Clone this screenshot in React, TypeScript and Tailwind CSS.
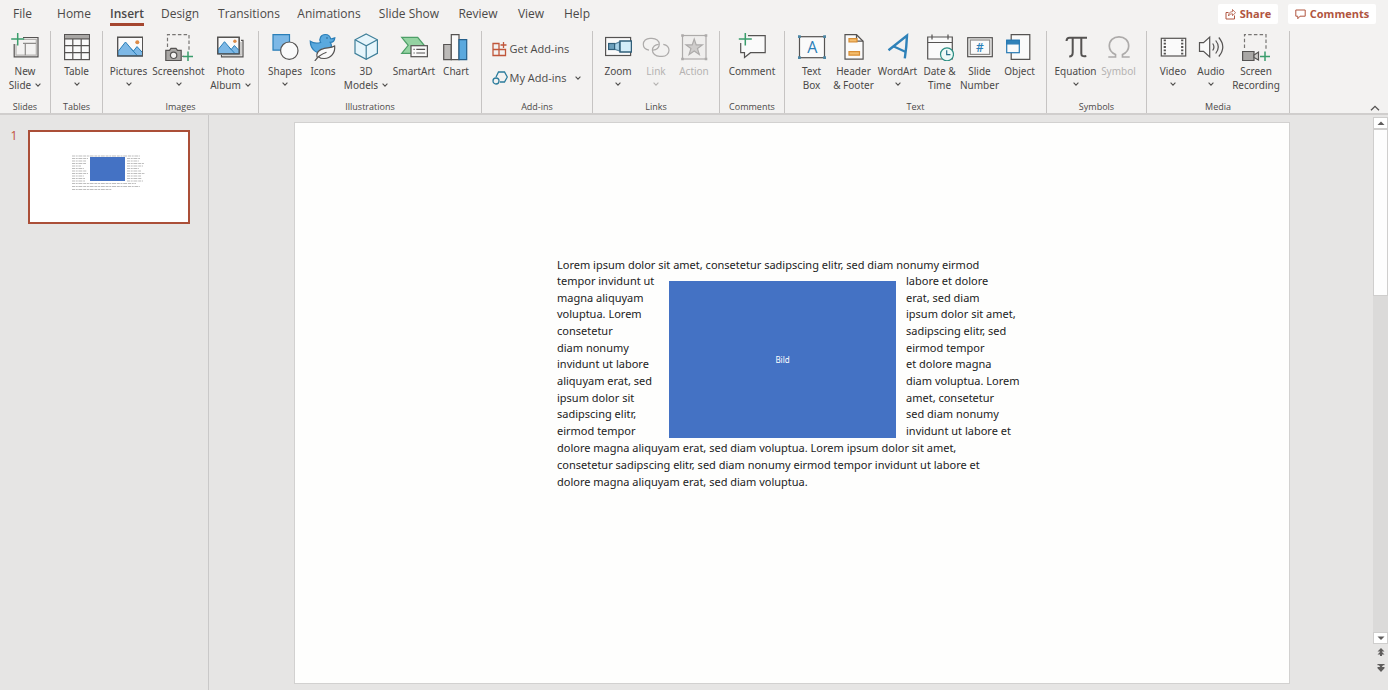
import type { ReactNode } from "react";

const ink = "#555352";
const blue = "#2b7fb8";
const sky = "#7db8e6";
const green = "#3a9d6c";

function Icon({ children, faded = false }: { children: ReactNode; faded?: boolean }) {
  return (
    <svg
      viewBox="0 0 28 28"
      width="28"
      height="28"
      fill="none"
      stroke={faded ? "#adabaa" : ink}
      strokeWidth="1.2"
      className="shrink-0"
      aria-hidden="true"
    >
      {children}
    </svg>
  );
}

function Chevron({ faded = false }: { faded?: boolean }) {
  return (
    <svg
      viewBox="0 0 6 4"
      width="6"
      height="4"
      fill="none"
      stroke={faded ? "#b5b3b2" : "#504e4d"}
      strokeWidth="1.1"
      className="shrink-0"
      aria-hidden="true"
    >
      <path d="M.6.7 3 3.1 5.4.7" />
    </svg>
  );
}

const icons: Record<string, ReactNode> = {
  newSlide: (
    <Icon>
      <path d="M12 4.5h15v19.3H3.2V11" />
      <path d="M12 6.3h13.3v15.8H5V11" stroke="#b5b3b1" />
      <path d="M12 10.3h13M14.3 10.3v12" stroke="#8d8b89" />
      <path d="M6.7 0v12.5M.2 6h13" stroke={green} strokeWidth="1.5" />
    </Icon>
  ),
  table: (
    <Icon>
      <rect x="1.6" y="1.6" width="24.8" height="25" fill="#fafafa" />
      <path d="M2 2h24v3.6H2z" fill="#a9a7a5" stroke="none" />
      <path d="M1.6 5.8h24.8M1.6 12.6h24.8M1.6 19.6h24.8M9.8 5.8v21M18.2 5.8v21" />
    </Icon>
  ),
  pictures: (
    <Icon>
      <rect x="2.6" y="4.3" width="25" height="18.6" fill="#fafafa" />
      <path d="M3 18.6 10.5 9l7.8 9.2 3.7-4.6 5.5 6v3.2H3z" fill={sky} stroke={blue} strokeWidth="1" />
      <path d="m16 15.6 6.5 7.3" stroke={blue} strokeWidth="1" />
      <circle cx="22.3" cy="9.3" r="2" fill="#dd8b47" stroke="none" />
      <rect x="2.6" y="4.3" width="25" height="18.6" />
    </Icon>
  ),
  screenshot: (
    <Icon>
      <path d="M2.5 14V1.6H24V18M17 23.400h2" strokeDasharray="3.500 2.200" stroke="#777573" />
      <path d="M.8 17.300h3.700l1.500-2h5l1.500 2h3.700v10.200H.8z" fill="#a9a7a5" />
      <circle cx="8.600" cy="22.300" r="3.200" fill="#f4f3f2" />
      <path d="M23 18.500v10M18 23.500h10" stroke={green} strokeWidth="1.500" />
    </Icon>
  ),
  photoAlbum: (
    <Icon>
      <path d="M24 7.300h2v16.500H4.500V22" />
      <path d="M24 9v13H6" stroke="#b5b3b1" />
      <rect x=".7" y="4.300" width="21.500" height="16.500" fill="#fafafa" />
      <path d="m1.200 16.500 6.300-7.800 6.700 7.800 3.200-4 4.700 5v3.200H1.200z" fill={sky} stroke={blue} strokeWidth="1" />
      <path d="m12.400 14.500 5.500 6" stroke={blue} strokeWidth="1" />
      <circle cx="17.900" cy="8.300" r="1.700" fill="#dd8b47" stroke="none" />
      <rect x=".7" y="4.300" width="21.500" height="16.500" />
    </Icon>
  ),
  shapes: (
    <Icon>
      <path d="M2 1.700h16.500v15.500H2z" fill={sky} stroke={blue} />
      <circle cx="18.300" cy="17.700" r="8.700" fill="#fafafa" />
    </Icon>
  ),
  icons: (
    <Icon>
      <path
        d="M1.300 8.200c3.300 2.300 6.700 2.300 10.300 1.300-2-3.800.4-8 4.700-8 2.700 0 4.800 1.700 5.300 4.200 1.500.2 2.800-.1 4.200-.8-.2 2.900-1.900 4.400-4.600 4.500 3.500 5-1.300 10.700-8.700 10.700-7 0-11.200-5.300-11.200-11.900z"
        fill="#5aa9de"
        stroke={blue}
      />
      <circle cx="18" cy="5" r=".8" fill="#255f88" stroke="none" />
      <path d="M8.300 24.500c-1.600-4.200 1.500-8.200 7-9.200 4.500-.8 7.500-.6 10.300-2.400 1 6.600-3.500 12.600-10.400 12.600-2.500 0-4.500-.6-5.500-1.700" fill="#fafafa" />
      <path d="M5.800 28c2.500-4 6.200-6.800 11.700-8.800" />
    </Icon>
  ),
  models: (
    <Icon>
      <path d="M14.200 1 25.400 6.800v13.500L14.200 26.400 3 20.300V6.800z" fill="#e6f5fb" stroke="#3e7f99" />
      <path d="m3 6.800 11.200 6 11.200-6M14.200 12.800v13.600" stroke="#3e7f99" />
    </Icon>
  ),
  smartArt: (
    <Icon>
      <path d="M1.700 4.300h16l6.500 8-6.500 8h-16l6.500-8z" fill="#94d3a2" stroke="#4d9f68" />
      <rect x="11" y="12.700" width="16.400" height="11" fill="#fafafa" />
      <path d="M13.500 16.300h1.200M16.300 16.300h8.800M13.500 20h1.200M16.300 20h8.800" />
    </Icon>
  ),
  chart: (
    <Icon>
      <path d="M1.700 11.500h7.600v15.200H1.700z" fill="#bcbab8" />
      <path d="M9.300 1.600H17v25.100H9.300z" fill="#fafafa" />
      <path d="M17 6.700h7.700v20H17z" fill="#5aa9de" stroke="#245f8b" />
    </Icon>
  ),
  zoom: (
    <Icon>
      <rect x="1.600" y="4.500" width="25" height="18" fill="#fafafa" />
      <path d="m9.500 11.500 6-2.500v9l-6-2.200z" fill="#a9d2e8" stroke="#5b87a0" />
      <rect x="4.600" y="10.500" width="6" height="6" fill="#6c9fbb" stroke="#315f7a" />
      <rect x="16" y="8" width="11.500" height="11" fill="#d4edf8" stroke="#315f7a" strokeWidth="1.500" />
    </Icon>
  ),
  link: (
    <Icon faded>
      <path d="M7 17.200C3.300 16.500 1.300 14.300 1.300 11.300c0-3.500 2.900-6 6.700-6h2c4.200 0 7.300 2.600 7.300 6 0 3.500-2.800 5.900-6.300 5.900" />
      <path d="M21.300 11.300c3.700.7 5.700 3 5.700 6 0 3.500-2.900 6-6.700 6h-2.600c-4.200 0-7.300-2.600-7.300-6 0-3.500 2.800-6 6.300-6" />
    </Icon>
  ),
  action: (
    <Icon faded>
      <rect x="2.500" y="2.500" width="23.500" height="23.500" fill="#efeeed" />
      <path d="M1.200 1.200h2.600v2.600H1.200zM24.700 1.200h2.600v2.600h-2.600zM1.200 24.700h2.600v2.600H1.200zM24.700 24.700h2.600v2.600h-2.600z" fill="#adabaa" stroke="none" />
      <path d="m14.200 6 2 5.900h6.200l-4.900 3.700 1.800 6-5.100-3.600-5.100 3.600 1.800-6-4.900-3.700h6.200z" fill="#cfcdcc" />
    </Icon>
  ),
  comment: (
    <Icon>
      <path d="M10 2.700h17.200v17H12.500L6.500 24.500v-4.800H2.700V10" fill="#fafafa" />
      <path d="M7.300 0v12.500M.8 6h13" stroke={green} strokeWidth="1.500" />
    </Icon>
  ),
  textBox: (
    <Icon>
      <rect x="1.500" y="3.700" width="25" height="21" fill="#fafafa" />
      <path d="M0 2.300h2.800v2.800H0zM25.200 2.300H28v2.800h-2.800zM0 23.200h2.800V26H0zM25.200 23.200H28V26h-2.800z" fill="#4d87a5" stroke="none" />
      <text x="14.200" y="20" textAnchor="middle" fontSize="16" fontFamily="'Open Sans', sans-serif" fill={blue} stroke="none">
        A
      </text>
    </Icon>
  ),
  header: (
    <Icon>
      <path d="M5 1.700h11.500l6.600 6.500v18H5z" fill="#fafafa" />
      <path d="M16.500 1.700v6.500h6.600" />
      <path d="M9 5.600h8v3.200H9zM9 18.600h10.500v3.600H9z" fill="#f3bd6d" stroke="#d98e34" />
    </Icon>
  ),
  wordArt: (
    <Icon>
      <path d="M4.500 17.200 23 2.600c-.3 7.500-1 15-2.200 22.800" stroke="#2f82b9" strokeWidth="2.400" />
      <path d="m9.300 13.300 12 5.400" stroke="#2f82b9" strokeWidth="2.200" />
    </Icon>
  ),
  date: (
    <Icon>
      <path d="M1.700 4h24.600v22H1.700z" fill="#fafafa" />
      <path d="M1.700 9.500h24.600M6 1.500v5M22 1.500v5" />
      <circle cx="21" cy="21.300" r="6.500" fill="#eefaf7" stroke="#2d8f84" />
      <path d="M20.700 17.300v4.300h3.700" stroke="#27708a" />
    </Icon>
  ),
  slideNumber: (
    <Icon>
      <rect x="1.700" y="4.700" width="24.600" height="19" />
      <rect x="4.300" y="7" width="19.400" height="14.400" fill="#fafafa" stroke="#8d8b89" />
      <text x="14" y="18.600" textAnchor="middle" fontSize="12" fontWeight="600" fontFamily="'Open Sans', sans-serif" fill={blue} stroke="none">
        #
      </text>
    </Icon>
  ),
  object: (
    <Icon>
      <path d="M5.200 7V1.700h18.600v24.600H5.200V20" fill="#fafafa" />
      <rect x=".7" y="7.300" width="12.600" height="12.400" fill="#fafafa" stroke="#2779b3" />
      <path d="M.7 7.300h12.600v3.500H.7z" fill="#2f82b9" stroke="#2779b3" />
    </Icon>
  ),
  equation: (
    <Icon>
      <path d="M4.500 8c.2-2.300 1.200-3.200 3-3.200h17.500M10.700 5v14.500c0 2.500-1.200 4-3.500 4M19.300 5v15.500c0 2.500 1.500 3.200 5 2.500" strokeWidth="2" />
    </Icon>
  ),
  symbol: (
    <Icon faded>
      <path d="M3.300 24h7.200v-2.500C6.500 19.700 4.300 17 4.300 13c0-5.500 4-9.200 9.700-9.200s9.700 3.700 9.700 9.200c0 4-2.200 6.700-6.200 8.500V24h7.200" strokeWidth="1.700" />
    </Icon>
  ),
  video: (
    <Icon>
      <rect x="2.300" y="5.300" width="24.400" height="17.700" fill="#fafafa" />
      <path d="M5.800 6.500v16M23.200 6.500v16" strokeWidth="2.200" strokeDasharray="1.800 1.500" />
    </Icon>
  ),
  audio: (
    <Icon>
      <path d="M2.500 9.700h4L12.700 4v20l-6.200-5.700h-4z" fill="#fafafa" />
      <path d="M15.700 10.500c1.600 2.300 1.600 4.700 0 7M18.700 7.500c3.400 4.300 3.400 8.700 0 13M21.800 4.500c5.300 6.300 5.300 12.700 0 19" />
    </Icon>
  ),
  recording: (
    <Icon>
      <path d="M2.500 15V1.600H24V17" strokeDasharray="3.500 2.200" stroke="#777573" />
      <path d="M.6 18.500h11.400v9H.6z" fill="#a9a7a5" />
      <path d="m12 22 4.500-3v8L12 24.500z" fill="#cfcdcb" />
      <path d="M23 18.500v10M18 23.500h10" stroke={green} strokeWidth="1.500" />
    </Icon>
  ),
};

type Tool = {
  icon: string;
  lines: string[];
  width: string;
  menu?: "below" | "inline";
  disabled?: boolean;
};

function ToolButton({ icon, lines, width, menu, disabled }: Tool) {
  return (
    <button
      type="button"
      disabled={disabled}
      className={`flex flex-col items-center whitespace-nowrap font-['Noto_Sans','Open_Sans',sans-serif] text-[10px] leading-[14px] text-[#4b4948] disabled:text-[#b5b3b2] ${width}`}
    >
      {icons[icon]}
      <span className="mt-[3px]">{lines[0]}</span>
      {lines[1] && (
        <span className="flex items-center gap-1">
          {lines[1]}
          {menu === "inline" && <Chevron />}
        </span>
      )}
      {menu === "below" && (
        <span className="flex h-3 items-center">
          <Chevron faded={disabled} />
        </span>
      )}
    </button>
  );
}

function Group({ label, width, tools, children }: { label: string; width: string; tools?: Tool[]; children?: ReactNode }) {
  return (
    <section
      aria-label={label}
      className={`flex h-[82px] shrink-0 flex-col justify-between border-r border-[#c6c4c3] ${width}`}
    >
      <div className="flex justify-center pt-[2px]">
        {tools?.map((tool) => (
          <ToolButton key={tool.icon} {...tool} />
        ))}
        {children}
      </div>
      <h2 className="text-center text-[9px] leading-3 text-[#4b4948]">{label}</h2>
    </section>
  );
}

const tabs = [
  { name: "File", width: "w-[45px]" },
  { name: "Home", width: "w-[58px]" },
  { name: "Insert", width: "w-12" },
  { name: "Design", width: "w-[58px]" },
  { name: "Transitions", width: "w-20" },
  { name: "Animations", width: "w-20" },
  { name: "Slide Show", width: "w-20" },
  { name: "Review", width: "w-[58px]" },
  { name: "View", width: "w-12" },
  { name: "Help", width: "w-11" },
];

function TabBar() {
  return (
    <div className="flex h-7 items-stretch justify-between pr-3">
      <nav className="flex" aria-label="Ribbon tabs">
        {tabs.map(({ name, width }) => (
          <button
            key={name}
            type="button"
            className={`flex shrink-0 justify-center whitespace-nowrap text-[12px] leading-7 text-[#4b4948] ${width}`}
          >
            {name === "Insert" ? (
              <span className="h-[26px] border-b-3 border-[#a5462f] font-semibold">{name}</span>
            ) : (
              name
            )}
          </button>
        ))}
      </nav>
      <div className="flex items-center gap-[10px] text-[11px] font-bold text-[#b0553f]">
        <button type="button" className="flex h-5 w-[60px] items-center justify-center gap-1 rounded-xs bg-white">
          <svg viewBox="0 0 11 12" width="11" height="12" fill="none" stroke="currentColor" aria-hidden="true">
            <path d="M3.500 4.500H1v6.500h8.500V7.500" />
            <path d="M3.500 8c0-3 1.500-4.300 4-4.300V1.500l3 3.200-3 3V5.800C5.500 5.800 4.300 6.500 3.500 8z" strokeWidth=".8" />
          </svg>
          Share
        </button>
        <button type="button" className="flex h-5 w-[88px] items-center justify-center gap-1 rounded-xs bg-white">
          <svg viewBox="0 0 11 11" width="11" height="11" fill="none" stroke="currentColor" aria-hidden="true">
            <path d="M.8 1h9.400v6.200H5L2.800 9.700V7.200h-2z" />
          </svg>
          Comments
        </button>
      </div>
    </div>
  );
}

function Ribbon() {
  return (
    <div className="flex h-[87px] items-start border-b-2 border-[#d0cecd] pt-[3px]">
      <Group
        label="Slides"
        width="w-[51px]"
        tools={[{ icon: "newSlide", lines: ["New", "Slide"], width: "w-12", menu: "inline" }]}
      />
      <Group
        label="Tables"
        width="w-[52px]"
        tools={[{ icon: "table", lines: ["Table"], width: "w-12", menu: "below" }]}
      />
      <Group
        label="Images"
        width="w-[156px]"
        tools={[
          { icon: "pictures", lines: ["Pictures"], width: "w-12", menu: "below" },
          { icon: "screenshot", lines: ["Screenshot"], width: "w-[52px]", menu: "below" },
          { icon: "photoAlbum", lines: ["Photo", "Album"], width: "w-[52px]", menu: "inline" },
        ]}
      />
      <Group
        label="Illustrations"
        width="w-[223px]"
        tools={[
          { icon: "shapes", lines: ["Shapes"], width: "w-[38px]", menu: "below" },
          { icon: "icons", lines: ["Icons"], width: "w-[38px]" },
          { icon: "models", lines: ["3D", "Models"], width: "w-12", menu: "inline" },
          { icon: "smartArt", lines: ["SmartArt"], width: "w-12" },
          { icon: "chart", lines: ["Chart"], width: "w-9" },
        ]}
      />
      <Group label="Add-ins" width="w-[111px]">
        <div className="flex w-[91px] flex-col gap-[13px] pt-2 text-[11px] leading-4 text-[#4b4948]">
          <button type="button" className="flex items-center gap-[2px] whitespace-nowrap">
            <svg viewBox="0 0 16 16" width="16" height="16" fill="none" stroke="#c0563a" strokeWidth="1.300" className="shrink-0" aria-hidden="true">
              <path d="M1 2.500h6v12H1zM1 8.500h12.500v6H7M11.500 1v6M8.500 4h6M7 8.500V6" />
            </svg>
            Get Add-ins
          </button>
          <button type="button" className="flex items-center gap-[2px] whitespace-nowrap">
            <svg viewBox="0 0 16 16" width="16" height="16" fill="none" stroke="#2b7c9c" strokeWidth="1.300" className="shrink-0" aria-hidden="true">
              <path d="M4 7 6.500 2h6L15.300 7l-2.800 5H8" />
              <circle cx="4" cy="11" r="3" />
            </svg>
            My Add-ins
            <span className="ml-auto pr-[2px]">
              <Chevron />
            </span>
          </button>
        </div>
      </Group>
      <Group
        label="Links"
        width="w-[127px]"
        tools={[
          { icon: "zoom", lines: ["Zoom"], width: "w-[38px]", menu: "below" },
          { icon: "link", lines: ["Link"], width: "w-[38px]", menu: "below", disabled: true },
          { icon: "action", lines: ["Action"], width: "w-[38px]", disabled: true },
        ]}
      />
      <Group label="Comments" width="w-[65px]" tools={[{ icon: "comment", lines: ["Comment"], width: "w-12" }]} />
      <Group
        label="Text"
        width="w-[262px]"
        tools={[
          { icon: "textBox", lines: ["Text", "Box"], width: "w-10" },
          { icon: "header", lines: ["Header", "& Footer"], width: "w-11" },
          { icon: "wordArt", lines: ["WordArt"], width: "w-11", menu: "below" },
          { icon: "date", lines: ["Date &", "Time"], width: "w-10" },
          { icon: "slideNumber", lines: ["Slide", "Number"], width: "w-10" },
          { icon: "object", lines: ["Object"], width: "w-10" },
        ]}
      />
      <Group
        label="Symbols"
        width="w-[100px]"
        tools={[
          { icon: "equation", lines: ["Equation"], width: "w-11", menu: "below" },
          { icon: "symbol", lines: ["Symbol"], width: "w-[42px]", disabled: true },
        ]}
      />
      <Group
        label="Media"
        width="w-[143px]"
        tools={[
          { icon: "video", lines: ["Video"], width: "w-[38px]", menu: "below" },
          { icon: "audio", lines: ["Audio"], width: "w-[38px]", menu: "below" },
          { icon: "recording", lines: ["Screen", "Recording"], width: "w-[52px]" },
        ]}
      />
      <button type="button" aria-label="Collapse ribbon" className="mr-2 ml-auto self-end pb-[2px]">
        <svg viewBox="0 0 10 6" width="10" height="6" fill="none" stroke="#555352" strokeWidth="1.300" aria-hidden="true">
          <path d="M1 5.300 5 1.300l4 4" />
        </svg>
      </button>
    </div>
  );
}

const thumbLines = [
  "M42 24h68",
  "M42 26.500h16M97 26.500h13",
  "M42 29h14M97 29h12",
  "M42 31.500h14M97 31.500h17",
  "M42 34h9M97 34h16",
  "M42 36.500h12M97 36.500h12",
  "M42 39h15M97 39h14",
  "M42 41.500h16M97 41.500h18",
  "M42 44h12M97 44h14",
  "M42 46.500h13M97 46.500h15",
  "M42 49h13M97 49h16",
  "M42 51.500h64",
  "M42 54.500h68",
  "M42 57.500h40",
];

function SlidePanel() {
  return (
    <aside className="w-[209px] shrink-0 border-r border-[#c9c8c8] pt-[15px] pl-2" aria-label="Slides">
      <button type="button" className="flex items-start gap-2 text-[#c0503c]">
        <span className="w-3 text-center text-[12px] leading-3 font-normal">1</span>
        <span className="block border-2 border-[#ab4f38] bg-white">
          <svg viewBox="0 0 158 90" width="158" height="90" aria-hidden="true">
            <path d={thumbLines.join("")} stroke="#a2a2a2" strokeWidth=".7" strokeDasharray="3 .7 2 .7 4 .8" fill="none" />
            <path d="M60 25h35v24H60z" fill="#4472c4" />
          </svg>
        </span>
      </button>
    </aside>
  );
}

const leftLines = [
  "tempor invidunt ut",
  "magna aliquyam",
  "voluptua. Lorem",
  "consetetur",
  "diam nonumy",
  "invidunt ut labore",
  "aliquyam erat, sed",
  "ipsum dolor sit",
  "sadipscing elitr,",
  "eirmod tempor",
];

const rightLines = [
  "labore et dolore",
  "erat, sed diam",
  "ipsum dolor sit amet,",
  "sadipscing elitr, sed",
  "eirmod tempor",
  "et dolore magna",
  "diam voluptua. Lorem",
  "amet, consetetur",
  "sed diam nonumy",
  "invidunt ut labore et",
];

function TextColumn({ lines, className }: { lines: string[]; className: string }) {
  return (
    <div className={`flex flex-col justify-between leading-4 ${className}`}>
      {lines.map((line) => (
        <p key={line}>{line}</p>
      ))}
    </div>
  );
}

function Slide() {
  return (
    <article className="aspect-[71/40] w-full bg-[#fefefd] pt-[133px] pl-[262px] font-['Noto_Sans','Open_Sans',sans-serif] text-[11px] leading-[17px] whitespace-nowrap text-[#222222] outline outline-[#d2d1d0]">
      <p>Lorem ipsum dolor sit amet, consetetur sadipscing elitr, sed diam nonumy eirmod</p>
      <div className="flex h-[166px]">
        <TextColumn lines={leftLines} className="w-28" />
        <div className="mt-2 flex h-[157px] w-[227px] items-center justify-center bg-[#4472c4] text-[8px] text-white">
          Bild
        </div>
        <TextColumn lines={rightLines} className="ml-[10px]" />
      </div>
      <p>dolore magna aliquyam erat, sed diam voluptua. Lorem ipsum dolor sit amet,</p>
      <p>consetetur sadipscing elitr, sed diam nonumy eirmod tempor invidunt ut labore et</p>
      <p>dolore magna aliquyam erat, sed diam voluptua.</p>
    </article>
  );
}

function ScrollButton({ label, path, boxed }: { label: string; path: string; boxed?: boolean }) {
  return (
    <button
      type="button"
      aria-label={label}
      className={`flex w-full items-center justify-center ${boxed ? "h-3 border border-[#cfcecd] bg-white" : "h-4"}`}
    >
      <svg viewBox="0 0 8 8" width="8" height="8" fill="#5f5d5c" aria-hidden="true">
        <path d={path} />
      </svg>
    </button>
  );
}

function ScrollBar() {
  return (
    <div className="flex w-[15px] shrink-0 flex-col pt-[2px] pb-[14px]">
      <ScrollButton label="Scroll up" path="M4 2.500 7.500 6H.5z" boxed />
      <div className="flex-1 bg-[#dbdad9]">
        <div className="h-[167px] border border-[#cfcecd] bg-[#fdfdfd]" />
      </div>
      <ScrollButton label="Scroll down" path="M4 6 .5 2.500h7z" boxed />
      <ScrollButton label="Previous slide" path="M4 0l3.500 3.500H5V4l2.500 2.500H5V8H3V6.500H.5L3 4v-.5H.5z" />
      <ScrollButton label="Next slide" path="M.5 0h7v1.200H6L4.800 3h2.700v1.200L4 8 .5 4.200V3h2.700L2 1.200H.5z" />
    </div>
  );
}

export default function App() {
  return (
    <div className="flex min-h-screen flex-col bg-[#e6e5e4] font-['Open_Sans','Noto_Sans',sans-serif]">
      <header className="bg-[#f3f2f1]">
        <TabBar />
        <Ribbon />
      </header>
      <div className="flex flex-1">
        <SlidePanel />
        <main className="min-w-0 flex-1 pt-2 pr-[84px] pb-[7px] pl-[86px]">
          <Slide />
        </main>
        <ScrollBar />
      </div>
    </div>
  );
}
